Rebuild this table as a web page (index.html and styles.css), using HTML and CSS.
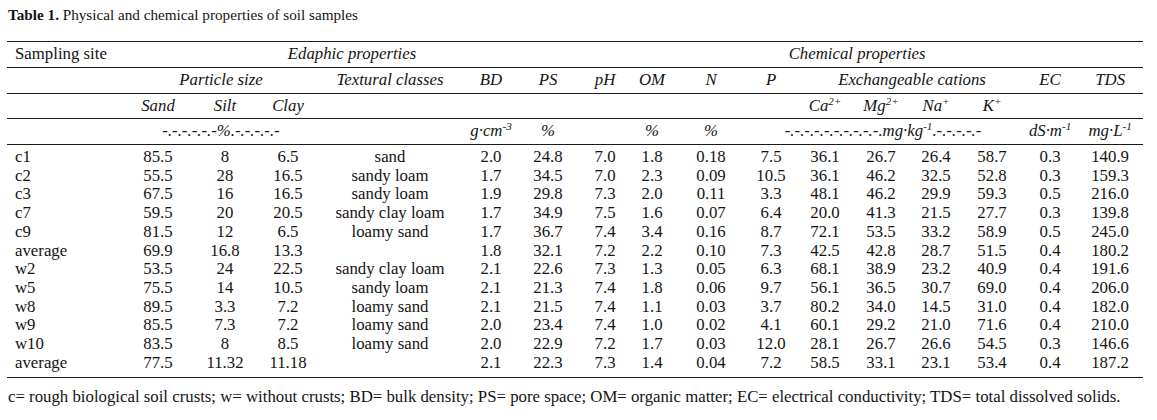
FILE: index.html
```html
<!DOCTYPE html>
<html>
<head>
<meta charset="utf-8">
<title>Table 1</title>
<link rel="stylesheet" href="styles.css">
</head>
<body>
<div class="page">
  <p class="title"><b>Table 1.</b> Physical and chemical properties of soil samples</p>
  <table class="soil">
    <colgroup>
      <col class="w-site"><col class="w-sand"><col class="w-silt"><col class="w-clay"><col class="w-tex">
      <col class="w-bd"><col class="w-ps"><col class="w-ph"><col class="w-om"><col class="w-n"><col class="w-p">
      <col class="w-ca"><col class="w-mg"><col class="w-na"><col class="w-k"><col class="w-ec"><col class="w-tds">
    </colgroup>
    <thead>
      <tr>
        <th class="site">Sampling site</th>
        <th colspan="6">Edaphic properties</th>
        <th colspan="10">Chemical properties</th>
      </tr>
      <tr>
        <th></th>
        <th colspan="3">Particle size</th>
        <th>Textural classes</th>
        <th>BD</th><th>PS</th><th>pH</th><th>OM</th><th>N</th><th>P</th>
        <th colspan="4" class="exch">Exchangeable cations</th>
        <th>EC</th><th>TDS</th>
      </tr>
      <tr>
        <th></th>
        <th>Sand</th><th>Silt</th><th>Clay</th>
        <th colspan="7"></th>
        <th>Ca<sup>2+</sup></th><th>Mg<sup>2+</sup></th><th>Na<sup>+</sup></th><th>K<sup>+</sup></th>
        <th colspan="2"></th>
      </tr>
      <tr>
        <th></th>
        <th colspan="3">-.-.-.-.-.-%.-.-.-.-.-</th>
        <th></th>
        <th>g·cm<sup>-3</sup></th>
        <th>%</th>
        <th></th>
        <th>%</th>
        <th>%</th>
        <th colspan="5">-.-.-.-.-.-.-.-.-.-.mg·kg<sup>-1</sup>.-.-.-.-.-</th>
        <th>dS·m<sup>-1</sup></th>
        <th>mg·L<sup>-1</sup></th>
      </tr>
    </thead>
    <tbody>
      <tr class="first"><td class="site">c1</td><td>85.5</td><td>8</td><td>6.5</td><td>sand</td><td>2.0</td><td>24.8</td><td>7.0</td><td>1.8</td><td>0.18</td><td>7.5</td><td>36.1</td><td>26.7</td><td>26.4</td><td>58.7</td><td>0.3</td><td>140.9</td></tr>
      <tr><td class="site">c2</td><td>55.5</td><td>28</td><td>16.5</td><td>sandy loam</td><td>1.7</td><td>34.5</td><td>7.0</td><td>2.3</td><td>0.09</td><td>10.5</td><td>36.1</td><td>46.2</td><td>32.5</td><td>52.8</td><td>0.3</td><td>159.3</td></tr>
      <tr><td class="site">c3</td><td>67.5</td><td>16</td><td>16.5</td><td>sandy loam</td><td>1.9</td><td>29.8</td><td>7.3</td><td>2.0</td><td>0.11</td><td>3.3</td><td>48.1</td><td>46.2</td><td>29.9</td><td>59.3</td><td>0.5</td><td>216.0</td></tr>
      <tr><td class="site">c7</td><td>59.5</td><td>20</td><td>20.5</td><td>sandy clay loam</td><td>1.7</td><td>34.9</td><td>7.5</td><td>1.6</td><td>0.07</td><td>6.4</td><td>20.0</td><td>41.3</td><td>21.5</td><td>27.7</td><td>0.3</td><td>139.8</td></tr>
      <tr><td class="site">c9</td><td>81.5</td><td>12</td><td>6.5</td><td>loamy sand</td><td>1.7</td><td>36.7</td><td>7.4</td><td>3.4</td><td>0.16</td><td>8.7</td><td>72.1</td><td>53.5</td><td>33.2</td><td>58.9</td><td>0.5</td><td>245.0</td></tr>
      <tr><td class="site">average</td><td>69.9</td><td>16.8</td><td>13.3</td><td></td><td>1.8</td><td>32.1</td><td>7.2</td><td>2.2</td><td>0.10</td><td>7.3</td><td>42.5</td><td>42.8</td><td>28.7</td><td>51.5</td><td>0.4</td><td>180.2</td></tr>
      <tr><td class="site">w2</td><td>53.5</td><td>24</td><td>22.5</td><td>sandy clay loam</td><td>2.1</td><td>22.6</td><td>7.3</td><td>1.3</td><td>0.05</td><td>6.3</td><td>68.1</td><td>38.9</td><td>23.2</td><td>40.9</td><td>0.4</td><td>191.6</td></tr>
      <tr><td class="site">w5</td><td>75.5</td><td>14</td><td>10.5</td><td>sandy loam</td><td>2.1</td><td>21.3</td><td>7.4</td><td>1.8</td><td>0.06</td><td>9.7</td><td>56.1</td><td>36.5</td><td>30.7</td><td>69.0</td><td>0.4</td><td>206.0</td></tr>
      <tr><td class="site">w8</td><td>89.5</td><td>3.3</td><td>7.2</td><td>loamy sand</td><td>2.1</td><td>21.5</td><td>7.4</td><td>1.1</td><td>0.03</td><td>3.7</td><td>80.2</td><td>34.0</td><td>14.5</td><td>31.0</td><td>0.4</td><td>182.0</td></tr>
      <tr><td class="site">w9</td><td>85.5</td><td>7.3</td><td>7.2</td><td>loamy sand</td><td>2.0</td><td>23.4</td><td>7.4</td><td>1.0</td><td>0.02</td><td>4.1</td><td>60.1</td><td>29.2</td><td>21.0</td><td>71.6</td><td>0.4</td><td>210.0</td></tr>
      <tr><td class="site">w10</td><td>83.5</td><td>8</td><td>8.5</td><td>loamy sand</td><td>2.0</td><td>22.9</td><td>7.2</td><td>1.7</td><td>0.03</td><td>12.0</td><td>28.1</td><td>26.7</td><td>26.6</td><td>54.5</td><td>0.3</td><td>146.6</td></tr>
      <tr class="last"><td class="site">average</td><td>77.5</td><td>11.32</td><td>11.18</td><td></td><td>2.1</td><td>22.3</td><td>7.3</td><td>1.4</td><td>0.04</td><td>7.2</td><td>58.5</td><td>33.1</td><td>23.1</td><td>53.4</td><td>0.4</td><td>187.2</td></tr>
    </tbody>
  </table>
  <p class="note">c= rough biological soil crusts; w= without crusts; BD= bulk density; PS= pore space; OM= organic matter; EC= electrical conductivity; TDS= total dissolved solids.</p>
</div>
</body>
</html>
```

FILE: styles.css
```css
html, body {
  margin: 0;
  padding: 0;
  background: #ffffff;
}

.page {
  padding: 5px 0 0 8px;
  font-family: "Liberation Serif", "Times New Roman", serif;
  font-size: 16.8px;
  color: #141414;
}

.title {
  margin: 0 0 17px 0;
  font-size: 15.2px;
  line-height: 19px;
}

.title b {
  font-weight: bold;
}

.soil {
  margin-left: -1px;
  width: 1136px;
  table-layout: fixed;
  border-collapse: collapse;
  border-top: 1px solid #1a1a1a;
  border-bottom: 1px solid #1a1a1a;
}

.w-site { width: 119px; }
.w-sand { width: 64px; }
.w-silt { width: 70px; }
.w-clay { width: 56px; }
.w-tex  { width: 148px; }
.w-bd   { width: 54px; }
.w-ps   { width: 60px; }
.w-ph   { width: 54px; }
.w-om   { width: 40px; }
.w-n    { width: 78px; }
.w-p    { width: 42px; }
.w-ca   { width: 66px; }
.w-mg   { width: 46px; }
.w-na   { width: 64px; }
.w-k    { width: 48px; }
.w-ec   { width: 68px; }
.w-tds  { width: 59px; }

.soil th {
  font-weight: normal;
  font-style: italic;
  text-align: center;
  white-space: nowrap;
  padding: 3px 0;
  line-height: 18.75px;
  border-bottom: 1px solid #1a1a1a;
}

.soil th.site {
  font-style: normal;
  text-align: left;
  padding-left: 8px;
}

.soil th.exch {
  padding-left: 16px;
}

.soil td {
  text-align: center;
  white-space: nowrap;
  padding: 0;
  line-height: 18.7px;
}

.soil td.site {
  text-align: left;
  padding-left: 8px;
}

.soil th:last-child,
.soil td:last-child {
  padding-right: 7px;
}

.soil tr.first td {
  padding-top: 3px;
}

.soil tr.last td {
  padding-bottom: 4.5px;
}

.soil sup {
  font-size: 0.66em;
  line-height: 0;
  vertical-align: 0.5em;
}

.note {
  margin: 9px 0 0 0;
  line-height: 19px;
}
```
